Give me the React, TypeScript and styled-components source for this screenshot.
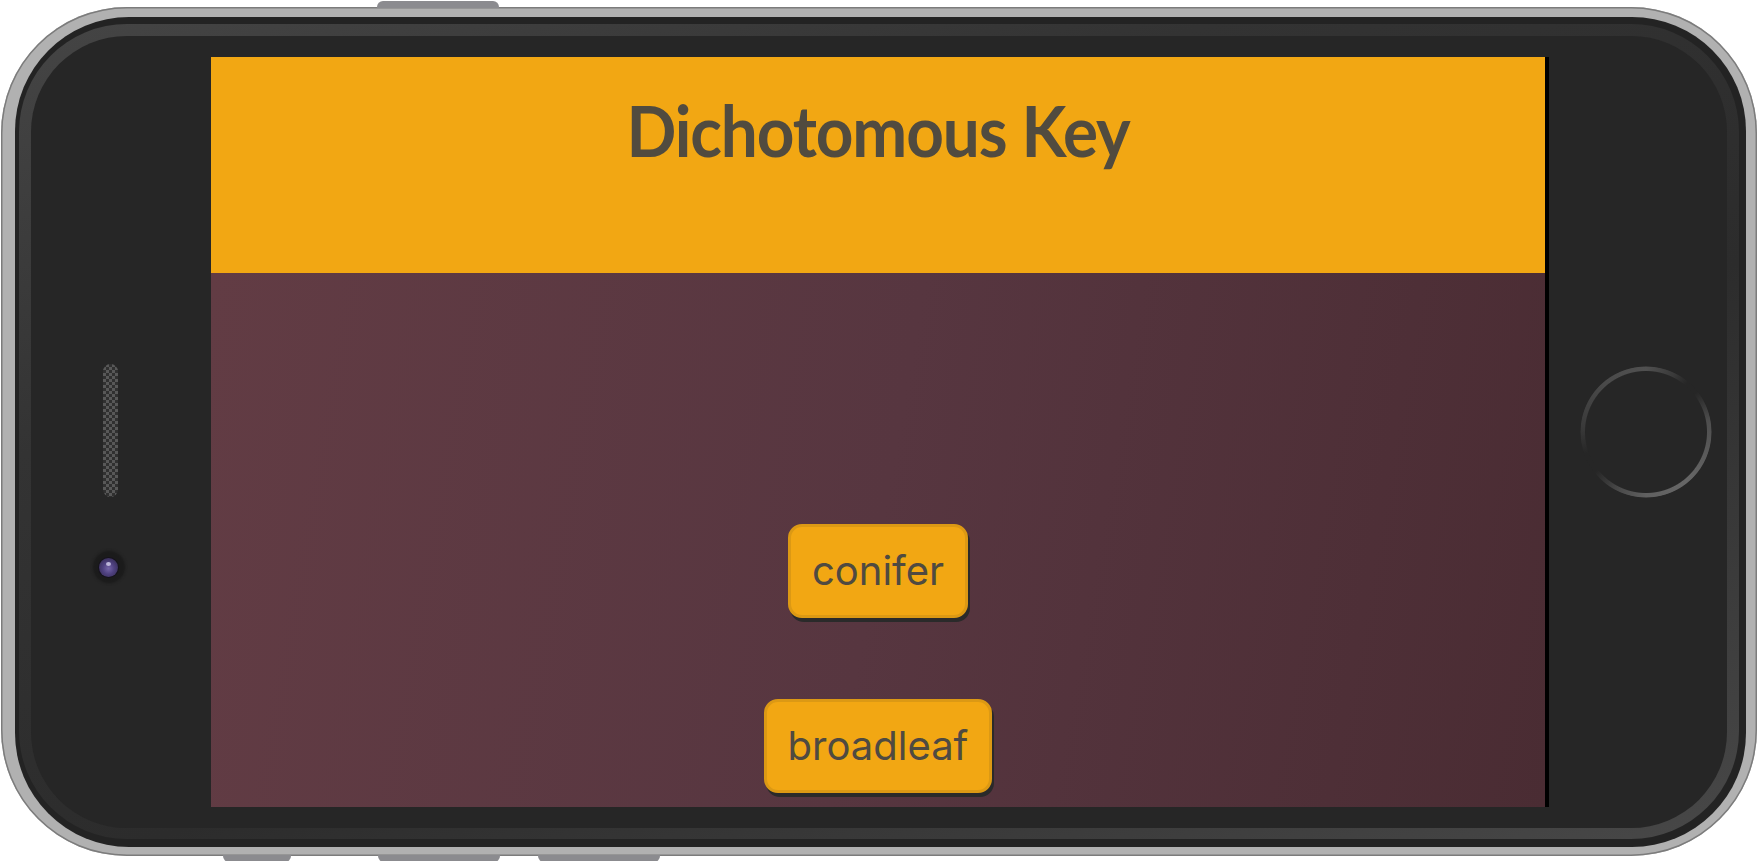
import React from "react";
import styled, { createGlobalStyle } from "styled-components";

const Global = createGlobalStyle`
  html, body { margin: 0; padding: 0; background: #ffffff; overflow: hidden; }
  #root { width: 1758px; height: 861px; }
`;

const Stage = styled.div`
  width: 1758px;
  height: 861px;
  padding: 7px 1px 0 1px;
  box-sizing: border-box;
`;

const Phone = styled.div`
  position: relative;
  width: 1756px;
  height: 849px;
  box-sizing: border-box;
  border-radius: 126px;
  background: #b1b1b1;
  box-shadow: inset 0 0 0 1.5px #7c7c7c;
  padding: 10px 11px 9px 14px;
`;

const SideKey = styled.div<{ $left: number; $width: number; $bottom?: boolean }>`
  position: absolute;
  left: ${(p) => p.$left}px;
  width: ${(p) => p.$width}px;
  height: 7px;
  background: #8b8b8f;
  ${(p) =>
    p.$bottom
      ? "bottom: -6px; border-radius: 0 0 6px 6px;"
      : "top: -6px; border-radius: 6px 6px 0 0;"}
`;

const Bezel = styled.div`
  height: 100%;
  box-sizing: border-box;
  border-radius: 114px;
  background: #232323;
  padding: 7px 7px 8px 4px;
`;

const Rim = styled.div`
  height: 100%;
  box-sizing: border-box;
  border-radius: 108px;
  background: linear-gradient(160deg, #454545 0%, #333333 30%, #2c2c2c 60%, #484848 100%);
  padding: 12px 12px 11px 12px;
`;

const Face = styled.div`
  height: 100%;
  box-sizing: border-box;
  border-radius: 96px;
  background: #262626;
  display: grid;
  grid-template-columns: 180px 1338px 178px;
  align-items: center;
`;

const LeftColumn = styled.div`
  align-self: stretch;
  display: flex;
  flex-direction: column;
  align-items: center;
  padding-top: 328px;
  padding-right: 22px;
  gap: 54px;
`;

const Speaker = styled.div`
  width: 15px;
  height: 133px;
  border-radius: 8px;
  background: repeating-conic-gradient(#585858 0% 25%, #303030 0% 50%) 0 0 / 6px 6px;
`;

const Camera = styled.div`
  width: 32px;
  height: 32px;
  border-radius: 50%;
  background: radial-gradient(circle, #1b1b1b 60%, #232323 100%);
  box-shadow: 0 0 3px #1a1a1a;
  display: flex;
  align-items: center;
  justify-content: center;
  margin-left: -3px;
`;

const Lens = styled.div`
  position: relative;
  width: 19px;
  height: 19px;
  border-radius: 50%;
  background: radial-gradient(circle at 50% 55%, #7565a8 0%, #4f4180 40%, #2b2342 100%);
  box-shadow: 0 0 0 1px #15121d;
  &::after {
    content: "";
    position: absolute;
    left: 7px;
    top: 4px;
    width: 5px;
    height: 4px;
    border-radius: 50%;
    background: #bdb6da;
  }
`;

const Screen = styled.div`
  width: 1334px;
  height: 750px;
  border-right: 4px solid #000;
  display: flex;
  flex-direction: column;
`;

const Header = styled.header`
  height: 216px;
  flex: none;
  background: #f2a713;
  display: flex;
  justify-content: center;
  padding-top: 30px;
  box-sizing: border-box;
`;

const Title = styled.h1`
  margin: 0;
  font-family: Lato, "Noto Sans", sans-serif;
  font-weight: 700;
  font-size: 71px;
  line-height: 1.2;
  letter-spacing: -1.2px;
  color: #514b3f;
  transform: scaleX(0.925);
`;

const Body = styled.main`
  flex: 1;
  background: linear-gradient(100deg, #623c44 0%, #573640 50%, #4a2c33 100%);
  display: flex;
  flex-direction: column;
  align-items: center;
  padding-top: 251px;
  gap: 81px;
  box-sizing: border-box;
`;

const Choice = styled.button`
  box-sizing: border-box;
  height: 94px;
  padding: 0 21px 2px;
  border: 3px solid #dc9914;
  border-radius: 14px;
  background: #f2a713;
  box-shadow: 2px 4px 0 #2a2a2a;
  font-family: Inter, Roboto, sans-serif;
  font-size: 40px;
  font-weight: 400;
  color: #4f4a41;
  cursor: pointer;
`;

const RightColumn = styled.div`
  display: flex;
  justify-content: center;
  padding-left: 16px;
`;

const HomeButton = styled.div`
  width: 132px;
  height: 132px;
  border-radius: 50%;
  background: conic-gradient(
    from 0deg,
    #505050 0deg,
    #3a3a3a 25deg,
    #262626 40deg,
    #262626 52deg,
    #4e4e4e 80deg,
    #666666 140deg,
    #606060 180deg,
    #4a4a4a 205deg,
    #262626 232deg,
    #262626 250deg,
    #3a3a3a 275deg,
    #4a4a4a 320deg,
    #505050 360deg
  );
  -webkit-mask: radial-gradient(circle, transparent 60.5px, #000 61.5px, #000 65px, transparent 66px);
  mask: radial-gradient(circle, transparent 60.5px, #000 61.5px, #000 65px, transparent 66px);
`;

export default function App() {
  return (
    <Stage>
      <Global />
      <Phone>
        <SideKey $left={376} $width={122} />
        <SideKey $left={222} $width={68} $bottom />
        <SideKey $left={377} $width={122} $bottom />
        <SideKey $left={537} $width={122} $bottom />
        <Bezel>
          <Rim>
            <Face>
              <LeftColumn>
                <Speaker />
                <Camera>
                  <Lens />
                </Camera>
              </LeftColumn>
              <Screen>
                <Header>
                  <Title>Dichotomous Key</Title>
                </Header>
                <Body>
                  <Choice>conifer</Choice>
                  <Choice>broadleaf</Choice>
                </Body>
              </Screen>
              <RightColumn>
                <HomeButton />
              </RightColumn>
            </Face>
          </Rim>
        </Bezel>
      </Phone>
    </Stage>
  );
}
